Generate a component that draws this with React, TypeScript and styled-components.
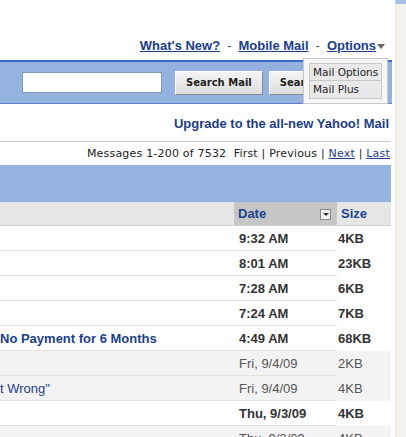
import styled, { createGlobalStyle } from "styled-components"

const GlobalStyle = createGlobalStyle`
  html, body {
    margin: 0;
    padding: 0;
    background: #fff;
    overflow: hidden;
  }
`

const Page = styled.div`
  display: flex;
  width: 406px;
  height: 437px;
  overflow: hidden;
`

const Main = styled.div`
  position: relative;
  width: 392px;
  flex-shrink: 0;
`

const Gutter = styled.div`
  flex: 1;
  margin-left: 3px;
  background: #f3f2ed;
  border-left: 1px solid #e6e4dc;
  border-top: 4px solid #a9bfe3;
`

const TopLinks = styled.div`
  height: 60px;
  display: flex;
  justify-content: flex-end;
  align-items: flex-end;
  padding: 0 7px 7px 0;
  box-sizing: border-box;
  font-family: "Liberation Sans", Arial, sans-serif;
  font-size: 13px;
  font-weight: bold;
  color: #1b3c8c;
  gap: 7px;
`

const TopLink = styled.a`
  color: #1b3c8c;
  text-decoration: underline;
`

const Dash = styled.span`
  color: #555;
  font-weight: normal;
`

const Caret = styled.span`
  display: inline-block;
  width: 0;
  height: 0;
  margin-left: 1px;
  border-left: 4px solid transparent;
  border-right: 4px solid transparent;
  border-top: 5px solid #666;
  vertical-align: middle;
`

const Toolbar = styled.div`
  height: 44px;
  box-sizing: border-box;
  border-top: 2px solid #3c6cc2;
  border-bottom: 1px solid #5d82c4;
  background: #94b2de;
  display: flex;
  align-items: center;
  padding-left: 22px;
`

const SearchInput = styled.div`
  width: 140px;
  height: 21px;
  box-sizing: border-box;
  background: #fff;
  border: 1px solid #7f9bb9;
`

const Button = styled.button`
  height: 24px;
  margin-left: ${(p: { $gap: number }) => p.$gap}px;
  padding: 0 10px;
  background: linear-gradient(#f4f4f4, #dedede);
  border: 1px solid #fff;
  border-right-color: #8a8a8a;
  border-bottom-color: #8a8a8a;
  font-family: "DejaVu Sans", Verdana, sans-serif;
  font-size: 10px;
  font-weight: bold;
  color: #222;
  white-space: nowrap;
`

const Menu = styled.div`
  position: absolute;
  left: 303px;
  top: 58px;
  width: 85px;
  padding: 4px 5px;
  box-sizing: border-box;
  background: #f6f6f6;
  border: 1px solid #c9c9c9;
  display: flex;
  flex-direction: column;
`

const MenuItem = styled.div`
  height: 18px;
  box-sizing: border-box;
  background: #e9e9e9;
  border: 1px solid #c8c8c8;
  border-top: ${(p: { $first?: boolean }) => (p.$first ? "1px solid #c8c8c8" : "none")};
  padding-left: 3px;
  font-family: "DejaVu Sans", Verdana, sans-serif;
  font-size: 10.5px;
  line-height: 16px;
  color: #222;
  white-space: nowrap;
`

const Upgrade = styled.div`
  height: 38px;
  box-sizing: border-box;
  border-bottom: 1px solid #c4c4c4;
  margin-right: 2px;
  display: flex;
  justify-content: flex-end;
  align-items: center;
  padding: 2px 1px 0 0;
  font-family: "Liberation Sans", Arial, sans-serif;
  font-size: 13px;
  font-weight: bold;
  color: #1c3d86;
`

const Pager = styled.div`
  height: 23px;
  display: flex;
  justify-content: flex-end;
  align-items: center;
  padding-right: 2px;
  font-family: "DejaVu Sans", Verdana, sans-serif;
  font-size: 11px;
  letter-spacing: 0.2px;
  color: #222;
  white-space: pre;
`

const PagerLink = styled.a`
  color: #1b3c8c;
  text-decoration: underline;
`

const Band = styled.div`
  height: 37px;
  width: 391px;
  background: #95b3df;
`

const Grid = styled.div`
  display: grid;
  grid-template-columns: 234px 103px 54px;
  width: 391px;
  font-family: "Liberation Sans", Arial, sans-serif;
  font-size: 13px;
`

const HeadCell = styled.div<{ $sorted?: boolean }>`
  height: 24px;
  box-sizing: border-box;
  border-bottom: 1px solid #cfcfcf;
  background: ${(p) => (p.$sorted ? "#c6c6c6" : "#e6e6e6")};
  display: flex;
  align-items: center;
  justify-content: space-between;
  padding: 0 6px 0 4px;
  font-weight: bold;
  color: #1d3f8e;
  &:last-child {
    padding-left: 2px;
  }
`

const SortBox = styled.span`
  width: 9px;
  height: 9px;
  margin-top: 2px;
  border: 1px solid #888;
  background: #f0f0f0;
  display: flex;
  align-items: center;
  justify-content: center;
  &::after {
    content: "";
    border-left: 3px solid transparent;
    border-right: 3px solid transparent;
    border-top: 3px solid #333;
  }
`

const Cell = styled.div<{ $read?: boolean; $last?: boolean; $link?: boolean }>`
  height: 25px;
  box-sizing: border-box;
  border-bottom: 1px solid ${(p) => (p.$last ? "transparent" : "#e2e2e2")};
  background: ${(p) => (p.$read ? "#f3f3f3" : "#fff")};
  display: flex;
  align-items: center;
  padding-left: ${(p) => (p.$last ? "1px" : p.$link ? "0" : "5px")};
  font-weight: ${(p) => (p.$read ? "normal" : "bold")};
  color: ${(p) => (p.$link ? "#1c3f8c" : p.$read ? "#555" : "#333")};
  white-space: nowrap;
  overflow: hidden;
`

type Msg = { subject: string; date: string; size: string; read?: boolean }

const MESSAGES: Msg[] = [
  { subject: "", date: "9:32 AM", size: "4KB" },
  { subject: "", date: "8:01 AM", size: "23KB" },
  { subject: "", date: "7:28 AM", size: "6KB" },
  { subject: "", date: "7:24 AM", size: "7KB" },
  { subject: "No Payment for 6 Months", date: "4:49 AM", size: "68KB" },
  { subject: "", date: "Fri, 9/4/09", size: "2KB", read: true },
  { subject: "t Wrong\"", date: "Fri, 9/4/09", size: "4KB", read: true },
  { subject: "", date: "Thu, 9/3/09", size: "4KB" },
  { subject: "", date: "Thu, 9/3/09", size: "4KB", read: true },
]

export default function App() {
  return (
    <>
      <GlobalStyle />
      <Page>
        <Main>
          <TopLinks>
            <TopLink>What's New?</TopLink>
            <Dash>-</Dash>
            <TopLink>Mobile Mail</TopLink>
            <Dash>-</Dash>
            <span>
              <TopLink>Options</TopLink>
              <Caret />
            </span>
          </TopLinks>

          <Toolbar>
            <SearchInput />
            <Button $gap={13}>Search Mail</Button>
            <Button $gap={6}>Search the Web</Button>
          </Toolbar>

          <Menu>
            <MenuItem $first>Mail Options</MenuItem>
            <MenuItem>Mail Plus</MenuItem>
          </Menu>

          <Upgrade>Upgrade to the all-new Yahoo! Mail</Upgrade>

          <Pager>
            Messages 1-200 of 7532  First | Previous | <PagerLink>Next</PagerLink> | <PagerLink>Last</PagerLink>
          </Pager>

          <Band />

          <Grid>
            <HeadCell />
            <HeadCell $sorted>
              Date
              <SortBox />
            </HeadCell>
            <HeadCell>Size</HeadCell>
            {MESSAGES.map((m, i) => (
              <>
                <Cell key={`s${i}`} $read={m.read} $link>{m.subject}</Cell>
                <Cell key={`d${i}`} $read={m.read}>{m.date}</Cell>
                <Cell key={`z${i}`} $read={m.read} $last>{m.size}</Cell>
              </>
            ))}
          </Grid>
        </Main>
        <Gutter />
      </Page>
    </>
  )
}
